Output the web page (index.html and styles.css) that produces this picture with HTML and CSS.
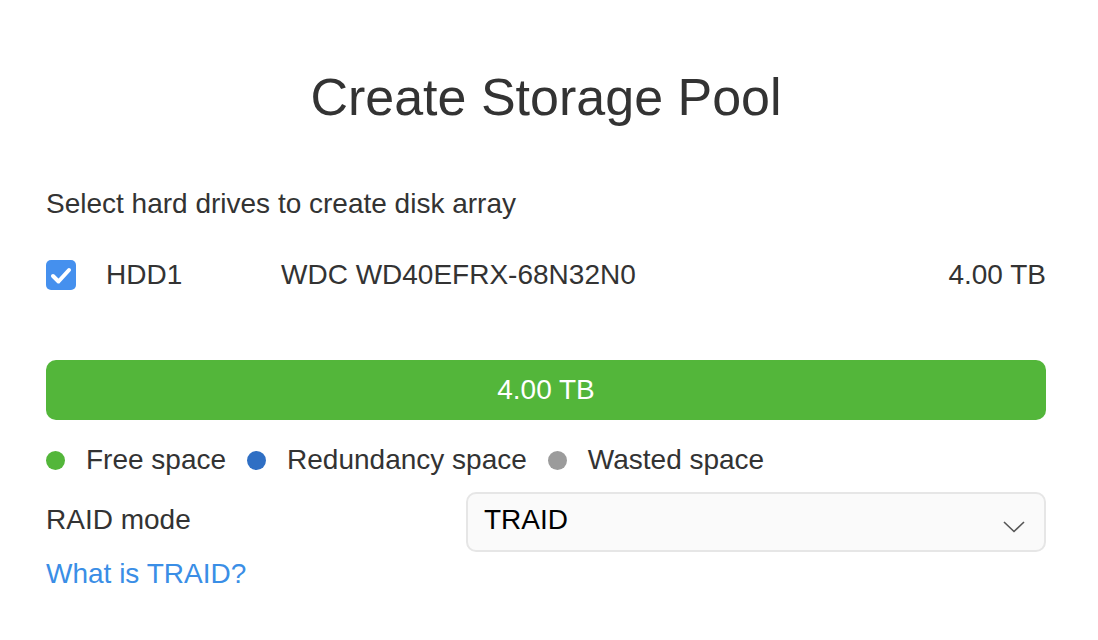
FILE: index.html
```html
<!DOCTYPE html>
<html lang="en">
<head>
  <meta charset="UTF-8" />
  <title>Create Storage Pool</title>
  <link rel="stylesheet" href="styles.css">
</head>
<body>
  <div class="dialog">
    <h1 class="title">Create Storage Pool</h1>

    <p class="hint">Select hard drives to create disk array</p>

    <div class="disk-row">
      <span class="check">
        <svg viewBox="0 0 30 30" width="30" height="30">
          <path d="M7 16 L12.5 21.5 L23 10" fill="none" stroke="#fff" stroke-width="4" stroke-linecap="round" stroke-linejoin="round"/>
        </svg>
      </span>
      <span class="disk-name">HDD1</span>
      <span class="disk-model">WDC WD40EFRX-68N32N0</span>
      <span class="disk-size">4.00 TB</span>
    </div>

    <div class="capacity-bar">4.00 TB</div>

    <div class="legend">
      <span class="legend-item"><i class="dot free"></i>Free space</span>
      <span class="legend-item"><i class="dot redundancy"></i>Redundancy space</span>
      <span class="legend-item"><i class="dot wasted"></i>Wasted space</span>
    </div>

    <div class="raid-row">
      <span class="raid-label">RAID mode</span>
      <div class="select">
        <span>TRAID</span>
        <svg class="chevron" viewBox="0 0 22 12" width="22" height="12">
          <path d="M1 1 L11 10.5 L21 1" fill="none" stroke="#555" stroke-width="1.6"/>
        </svg>
      </div>
    </div>

    <a class="help-link" href="#">What is TRAID?</a>
  </div>
</body>
</html>
```

FILE: styles.css
```css
body {
  margin: 0;
  background: #fff;
  font-family: "Liberation Sans", Arial, sans-serif;
  color: #333;
}

.dialog {
  width: 1000px;
  padding: 67px 52px 0 46px;
}

.title {
  margin: 0;
  font-size: 52px;
  font-weight: normal;
  line-height: 60px;
  text-align: center;
}

.hint {
  margin: 62px 0 0;
  font-size: 28px;
  line-height: 30px;
}

.disk-row {
  display: flex;
  align-items: center;
  margin-top: 41px;
  height: 30px;
  font-size: 28px;
}

.check {
  width: 30px;
  height: 30px;
  border-radius: 5px;
  background: #4590ee;
  display: flex;
}

.disk-name {
  margin-left: 30px;
  width: 175px;
}

.disk-model {
  flex: 1;
}

.capacity-bar {
  margin-top: 70px;
  height: 60px;
  border-radius: 10px;
  background: #53b63a;
  color: #fff;
  font-size: 28px;
  display: flex;
  align-items: center;
  justify-content: center;
}

.legend {
  display: flex;
  gap: 21px;
  margin-top: 25px;
  font-size: 28px;
  line-height: 30px;
}

.legend-item {
  display: flex;
  align-items: center;
  gap: 21px;
}

.dot {
  width: 19px;
  height: 19px;
  border-radius: 50%;
}

.dot.free { background: #53b63a; }
.dot.redundancy { background: #2f6fc4; }
.dot.wasted { background: #9b9b9b; }

.raid-row {
  display: flex;
  align-items: center;
  margin-top: 17px;
  font-size: 28px;
}

.raid-label {
  width: 420px;
  margin-bottom: 5px;
}

.select {
  flex: 1;
  height: 56px;
  border: 2px solid #e6e6e6;
  border-radius: 10px;
  background: #fafafa;
  color: #000;
  display: flex;
  align-items: center;
  justify-content: space-between;
  padding: 0 19px 0 16px;
}

.select span {
  margin-bottom: 4px;
}

.chevron {
  margin-top: 10px;
}

.help-link {
  display: block;
  margin-top: 7px;
  font-size: 28px;
  line-height: 30px;
  color: #3a8ee6;
  text-decoration: none;
}
```
